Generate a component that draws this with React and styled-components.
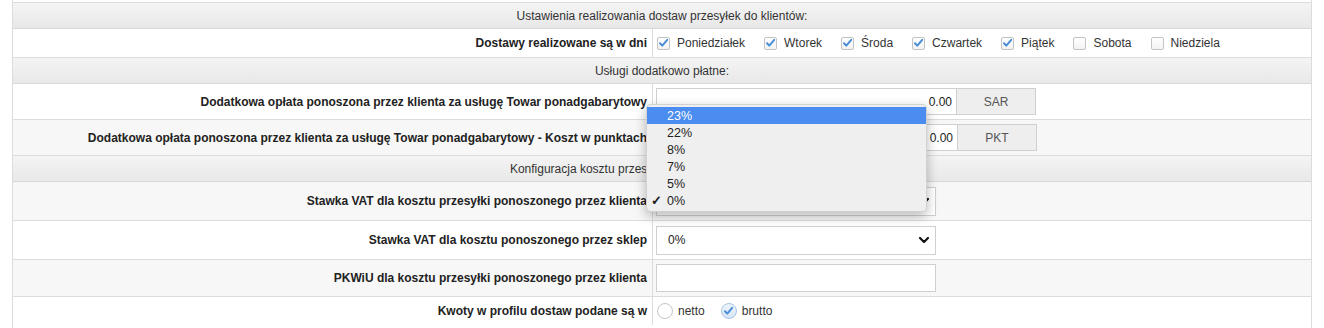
import React from 'react';
import styled, { createGlobalStyle } from 'styled-components';

const GlobalStyle = createGlobalStyle`
  body {
    margin: 0;
    background: #fff;
    font-family: "Liberation Sans", Arial, sans-serif;
    color: #222;
  }
`;

const Page = styled.div`
  position: relative;
  padding: 0 12px;
  width: 1324px;
  box-sizing: border-box;
`;

const Table = styled.div`
  width: 1300px;
  min-height: 330px;
  border-left: 1px solid #dcdcdc;
  border-right: 1px solid #dcdcdc;
  box-sizing: border-box;
`;

const CutRow = styled.div`
  height: 3px;
  box-sizing: border-box;
  border-bottom: 1px solid #dcdcdc;
`;

const Header = styled.div`
  height: 26px;
  box-sizing: border-box;
  border-bottom: 1px solid #d8d8d8;
  background: linear-gradient(#f4f4f4, #e8e8e8);
  display: flex;
  align-items: center;
  justify-content: center;
  font-size: 12px;
  color: #333;
`;

const Row = styled.div`
  display: grid;
  grid-template-columns: 640px 1fr;
  height: ${p => p.$h}px;
  box-sizing: border-box;
  border-bottom: ${p => (p.$last ? 'none' : '1px solid #dcdcdc')};
  background: ${p => (p.$shade ? '#f7f7f7' : '#fff')};
`;

const Label = styled.div`
  border-right: 1px solid #dcdcdc;
  display: flex;
  align-items: center;
  justify-content: flex-end;
  padding-right: 5px;
  font-size: 12px;
  font-weight: bold;
  color: #222;
`;

const Field = styled.div`
  display: flex;
  align-items: center;
  padding-left: 3px;
  font-size: 12px;
  color: #333;
`;

const Day = styled.label`
  display: flex;
  align-items: center;
  margin-right: 18px;
  margin-left: 1px;
`;

const Box = styled.span`
  width: 13px;
  height: 13px;
  box-sizing: border-box;
  border: 1px solid #c4c4c4;
  border-radius: 2px;
  background: linear-gradient(#fff, #f3f3f3);
  margin-right: 7px;
  display: flex;
  align-items: center;
  justify-content: center;
`;

const Radio = styled.span`
  width: 16px;
  height: 16px;
  box-sizing: border-box;
  border-radius: 50%;
  border: 1px solid ${p => (p.$on ? '#a9c3de' : '#c6c6c6')};
  background: ${p => (p.$on ? 'linear-gradient(#eef5fc, #d6e6f6)' : '#fff')};
  margin: 0 5px 0 1px;
  display: flex;
  align-items: center;
  justify-content: center;
`;

const RadioText = styled.span`
  margin-right: 15px;
`;

const InputGroup = styled.div`
  display: flex;
  height: 27px;
`;

const TextInput = styled.div`
  width: ${p => p.$w}px;
  box-sizing: border-box;
  border: 1px solid #d0d0d0;
  background: #fff;
  display: flex;
  align-items: center;
  justify-content: flex-end;
  padding-right: 4px;
  height: ${p => p.$hgt || 27}px;
  color: #222;
`;

const Addon = styled.div`
  width: 79px;
  box-sizing: border-box;
  border: 1px solid #d0d0d0;
  border-left: none;
  background: #eee;
  display: flex;
  align-items: center;
  justify-content: center;
  color: #555;
`;

const SelectBox = styled.div`
  width: 280px;
  height: 29px;
  box-sizing: border-box;
  border: 1px solid #d0d0d0;
  background: #fff;
  display: flex;
  align-items: center;
  justify-content: space-between;
  padding: 0 5px 0 11px;
  color: #222;
`;

const Popup = styled.div`
  position: absolute;
  left: 646px;
  top: 104px;
  width: 281px;
  height: 108px;
  box-sizing: border-box;
  padding-top: 2px;
  background: #efefef;
  border: 1px solid rgba(0, 0, 0, 0.12);
  border-radius: 5px;
  box-shadow: 0 4px 12px rgba(0, 0, 0, 0.28);
  font-size: 12.5px;
`;

const Option = styled.div`
  height: 17px;
  display: flex;
  align-items: center;
  position: relative;
  padding-left: 20px;
  background: ${p => (p.$active ? '#4a8cf0' : 'transparent')};
  color: ${p => (p.$active ? '#fff' : '#222')};
`;

const Tick = styled.span`
  position: absolute;
  left: 4px;
  top: 0;
  font-size: 13px;
  font-weight: bold;
  line-height: 17px;
  color: #222;
`;

const Check = () => (
  <svg width="11" height="10" viewBox="0 0 11 10">
    <path d="M2 5.2 L4.3 7.6 L9.2 1.8" fill="none" stroke="#4a8fd6" strokeWidth="2" strokeLinecap="round" strokeLinejoin="round" />
  </svg>
);

const Chevron = () => (
  <svg width="12" height="8" viewBox="0 0 12 8">
    <path d="M2 2 L6 6 L10 2" fill="none" stroke="#111" strokeWidth="2.2" strokeLinecap="round" strokeLinejoin="round" />
  </svg>
);

const days = [
  ['Poniedziałek', true],
  ['Wtorek', true],
  ['Środa', true],
  ['Czwartek', true],
  ['Piątek', true],
  ['Sobota', false],
  ['Niedziela', false],
];

const vatOptions = ['23%', '22%', '8%', '7%', '5%', '0%'];

export default function App() {
  return (
    <Page>
      <GlobalStyle />
      <Table>
        <CutRow />
        <Header>Ustawienia realizowania dostaw przesyłek do klientów:</Header>
        <Row $h={29}>
          <Label>Dostawy realizowane są w dni</Label>
          <Field>
            {days.map(([name, on]) => (
              <Day key={name}>
                <Box>{on && <Check />}</Box>
                {name}
              </Day>
            ))}
          </Field>
        </Row>
        <Header>Usługi dodatkowo płatne:</Header>
        <Row $h={36}>
          <Label>Dodatkowa opłata ponoszona przez klienta za usługę Towar ponadgabarytowy</Label>
          <Field>
            <InputGroup>
              <TextInput $w={301}>0.00</TextInput>
              <Addon>SAR</Addon>
            </InputGroup>
          </Field>
        </Row>
        <Row $h={36} $shade>
          <Label>Dodatkowa opłata ponoszona przez klienta za usługę Towar ponadgabarytowy - Koszt w punktach</Label>
          <Field>
            <InputGroup>
              <TextInput $w={302}>0.00</TextInput>
              <Addon>PKT</Addon>
            </InputGroup>
          </Field>
        </Row>
        <Header>Konfiguracja kosztu przesyłki ponoszonego przez klienta:</Header>
        <Row $h={39} $shade>
          <Label>Stawka VAT dla kosztu przesyłki ponoszonego przez klienta</Label>
          <Field>
            <SelectBox>
              <span>0%</span>
              <Chevron />
            </SelectBox>
          </Field>
        </Row>
        <Row $h={39}>
          <Label>Stawka VAT dla kosztu ponoszonego przez sklep</Label>
          <Field>
            <SelectBox>
              <span>0%</span>
              <Chevron />
            </SelectBox>
          </Field>
        </Row>
        <Row $h={37} $shade>
          <Label>PKWiU dla kosztu przesyłki ponoszonego przez klienta</Label>
          <Field>
            <TextInput $w={280} $hgt={28} />
          </Field>
        </Row>
        <Row $h={28} $last>
          <Label>Kwoty w profilu dostaw podane są w</Label>
          <Field>
            <Radio />
            <RadioText>netto</RadioText>
            <Radio $on>
              <Check />
            </Radio>
            <RadioText>brutto</RadioText>
          </Field>
        </Row>
      </Table>
      <Popup>
        {vatOptions.map((v, i) => (
          <Option key={v} $active={i === 0}>
            {v === '0%' && <Tick>✓</Tick>}
            {v}
          </Option>
        ))}
      </Popup>
    </Page>
  );
}
